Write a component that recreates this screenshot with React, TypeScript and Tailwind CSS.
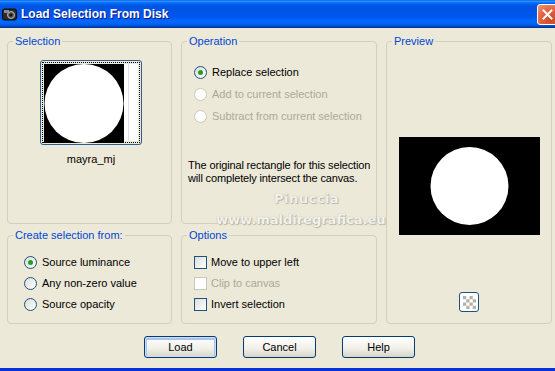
import React from "react";

const font = "font-['Liberation_Sans',Arial,sans-serif]";

function Radio({ checked, disabled, label, tight }: { checked?: boolean; disabled?: boolean; label: string; tight?: boolean }) {
  return (
    <div className={"flex items-center gap-[5px] " + (tight ? "h-[21px]" : "h-[22px]")}>
      <span
        className={
          "w-[13px] h-[13px] rounded-full border flex items-center justify-center " +
          (disabled
            ? "border-[#cac8bb] bg-white"
            : "border-[#1c5180] bg-[linear-gradient(135deg,#dcdcd7,#ffffff)]")
        }
      >
        {checked && <span className="w-[5px] h-[5px] rounded-full bg-[#21a121]" />}
      </span>
      <span className={disabled ? "text-[#aca899]" : "text-black"}>{label}</span>
    </div>
  );
}

function Check({ disabled, label }: { disabled?: boolean; label: string }) {
  return (
    <div className="flex items-center h-[21px] gap-[4px]">
      <span
        className={
          "w-[13px] h-[13px] border " +
          (disabled
            ? "border-[#cac8bb] bg-white"
            : "border-[#1c5180] bg-[linear-gradient(135deg,#dcdcd7,#ffffff)]")
        }
      />
      <span className={disabled ? "text-[#aca899]" : "text-black"}>{label}</span>
    </div>
  );
}

function Group({ title, className, children }: { title: string; className?: string; children: React.ReactNode }) {
  return (
    <fieldset className={"border border-[#d0d0bf] rounded-[4px] min-w-0 " + (className ?? "")}>
      <legend className="ml-[5px] px-[2px] leading-[13px] text-[#0046d5]">{title}</legend>
      {children}
    </fieldset>
  );
}

function Button({ label, isDefault }: { label: string; isDefault?: boolean }) {
  return (
    <button
      className={
        "w-[73px] h-[22px] rounded-[3px] border border-[#003c74] bg-[linear-gradient(to_bottom,#ffffff,#f0efe8_60%,#d8d4c6)] text-black text-[11px] leading-none " +
        (isDefault ? "shadow-[inset_0_0_0_1px_#cedcf6,inset_0_1px_0_2px_#a9c2ee]" : "")
      }
    >
      {label}
    </button>
  );
}

export default function App() {
  return (
    <div className={"relative w-[555px] h-[371px] bg-[#ece9d8] flex flex-col overflow-hidden text-[11px] text-black " + font}>
      {/* title bar */}
      <div className="h-[28px] shrink-0 flex items-center overflow-hidden bg-[linear-gradient(to_bottom,#0058ee_0%,#3593ff_4%,#288eff_6%,#127dff_8%,#036ffc_10%,#0262ee_14%,#0057e5_20%,#0054e3_24%,#0055eb_56%,#005bf5_66%,#026afe_76%,#0062ef_86%,#0052d6_92%,#0040ab_96%,#003092_100%)]">
        <svg width="15" height="14" viewBox="0 0 15 14" className="ml-[2px]">
          <rect x="0.5" y="2" width="14" height="11" rx="2" fill="#2a2a2a" stroke="#0a0a0a" />
          <rect x="2" y="3" width="5" height="3" fill="#8a8a8a" />
          <circle cx="9" cy="8" r="3.5" fill="#555" stroke="#bbb" strokeWidth="1" />
          <circle cx="9" cy="8" r="1.5" fill="#111" />
        </svg>
        <span className="ml-[4px] text-white font-bold text-[12px] [text-shadow:1px_1px_0_#0a1883]">
          Load Selection From Disk
        </span>
        <div className="ml-auto mr-[-3px] w-[21px] h-[21px] rounded-[3px] border border-white bg-[radial-gradient(circle_at_70%_80%,#cc4b25,#e2613c_50%,#f29a7c)] flex items-center justify-center">
          <svg width="11" height="11" viewBox="0 0 11 11">
            <path d="M1.5 1.5 L9.5 9.5 M9.5 1.5 L1.5 9.5" stroke="white" strokeWidth="2" strokeLinecap="square" />
          </svg>
        </div>
      </div>

      {/* body */}
      <div className="grid grid-cols-[165px_196px_166px] grid-rows-[189px_95px] gap-x-[9px] gap-y-[5px] px-[7px] pt-[7px]">
        <Group title="Selection" className="flex flex-col items-center">
          <div className="flex flex-col items-center pl-[3px]">
            <div className="mt-[12px] w-[102px] h-[85px] rounded-[3px] border border-[#2c5c94] p-[1px]">
              <div className="w-full h-full border border-dotted border-black flex items-stretch p-[1px]">
                <svg width="80" height="79" viewBox="0 0 80 79">
                  <rect width="80" height="79" fill="#000" />
                  <circle cx="40" cy="39.5" r="39.5" fill="#fff" />
                </svg>
                <div className="flex-1 bg-white flex">
                  <div className="w-[4px]" />
                  <div className="w-[1px] bg-[#e0e0e0]" />
                </div>
              </div>
            </div>
            <div className="mt-[8px] leading-[13px]">mayra_mj</div>
          </div>
        </Group>

        <Group title="Operation">
          <div className="mt-[13px] pl-[12px]">
            <Radio checked label="Replace selection" />
            <Radio disabled label="Add to current selection" />
            <Radio disabled label="Subtract from current selection" />
          </div>
          <p className="mt-[32px] pl-[6px] leading-[13px] whitespace-nowrap tracking-[-0.15px]">
            The original rectangle for this selection
            <br />
            will completely intersect the canvas.
          </p>
        </Group>

        <Group title="Preview" className="row-span-2 flex flex-col items-center">
          <svg width="141" height="98" viewBox="0 0 141 98" className="mt-[89px]">
            <rect width="141" height="98" fill="#000" />
            <circle cx="70.5" cy="49" r="39" fill="#fff" />
          </svg>
          <div className="mt-[57px] w-[20px] h-[20px] rounded-[3px] border border-[#1c5180] bg-white flex items-center justify-center">
            <svg width="13" height="13" viewBox="0 0 12 12">
              <rect width="12" height="12" fill="#fff" />
              <rect x="0" y="0" width="3" height="3" fill="#b4b2a6" />
              <rect x="6" y="0" width="3" height="3" fill="#b4b2a6" />
              <rect x="3" y="3" width="3" height="3" fill="#b4b2a6" />
              <rect x="9" y="3" width="3" height="3" fill="#b4b2a6" />
              <rect x="0" y="6" width="3" height="3" fill="#b4b2a6" />
              <rect x="6" y="6" width="3" height="3" fill="#b4b2a6" />
              <rect x="3" y="9" width="3" height="3" fill="#b4b2a6" />
              <rect x="9" y="9" width="3" height="3" fill="#b4b2a6" />
            </svg>
          </div>
        </Group>

        <Group title="Create selection from:">
          <div className="mt-[10px] pl-[16px]">
            <Radio tight checked label="Source luminance" />
            <Radio tight label="Any non-zero value" />
            <Radio tight label="Source opacity" />
          </div>
        </Group>

        <Group title="Options">
          <div className="mt-[10px] pl-[12px]">
            <Check label="Move to upper left" />
            <Check disabled label="Clip to canvas" />
            <Check label="Invert selection" />
          </div>
        </Group>
      </div>

      {/* buttons */}
      <div className="mt-[12px] flex justify-center gap-[26px] pl-[4px]">
        <Button label="Load" isDefault />
        <Button label="Cancel" />
        <Button label="Help" />
      </div>

      <div className="mt-auto h-[3px] bg-[#0831d9]" />

      {/* watermark */}
      <div className="absolute left-[274px] top-[191px] text-[13px] leading-[15px] font-bold tracking-[0.5px] text-[#f3f2ec] [text-shadow:0_0_1px_#a8a596,1px_1px_1px_#bcb9aa] font-['DejaVu_Sans',sans-serif]">
        Pinuccia
      </div>
      <div className="absolute left-[216px] top-[212px] text-[13px] leading-[15px] font-bold tracking-[0px] text-[#f3f2ec] [text-shadow:0_0_1px_#a8a596,1px_1px_1px_#bcb9aa] font-['DejaVu_Sans',sans-serif]">
        www.maldiregrafica.eu
      </div>
    </div>
  );
}
